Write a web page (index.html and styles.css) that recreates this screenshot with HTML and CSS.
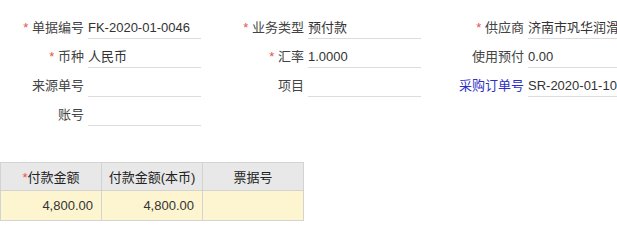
FILE: index.html
```html
<!DOCTYPE html>
<html lang="zh-CN">
<head>
<meta charset="utf-8">
<title>付款单</title>
<link rel="stylesheet" href="styles.css">
</head>
<body>
<div class="form">
  <div class="item"><label class="lbl"><span class="req">*</span> 单据编号</label><div class="field">FK-2020-01-0046</div></div>
  <div class="item"><label class="lbl"><span class="req">*</span> 业务类型</label><div class="field">预付款</div></div>
  <div class="item"><label class="lbl"><span class="req">*</span> 供应商</label><div class="field">济南市巩华润滑油有限公司</div></div>

  <div class="item"><label class="lbl"><span class="req">*</span> 币种</label><div class="field">人民币</div></div>
  <div class="item"><label class="lbl"><span class="req">*</span> 汇率</label><div class="field">1.0000</div></div>
  <div class="item"><label class="lbl">使用预付</label><div class="field">0.00</div></div>

  <div class="item"><label class="lbl">来源单号</label><div class="field"></div></div>
  <div class="item"><label class="lbl">项目</label><div class="field"></div></div>
  <div class="item"><label class="lbl link">采购订单号</label><div class="field">SR-2020-01-1001</div></div>

  <div class="item"><label class="lbl">账号</label><div class="field"></div></div>
</div>

<table class="grid">
  <thead>
    <tr><th><span class="req">*</span>付款金额</th><th>付款金额(本币)</th><th>票据号</th></tr>
  </thead>
  <tbody>
    <tr><td class="num">4,800.00</td><td class="num">4,800.00</td><td></td></tr>
  </tbody>
</table>
</body>
</html>
```
FILE: styles.css
```css
html, body {
  margin: 0;
  padding: 0;
  background: #fff;
  overflow: hidden;
}
body {
  font-family: "Liberation Sans", "Noto Sans CJK SC", sans-serif;
  font-size: 13px;
  color: #333;
  width: 617px;
}
.form {
  display: grid;
  grid-template-columns: 220px 220px 220px;
  row-gap: 8px;
  padding-top: 18px;
}
.item {
  display: flex;
  align-items: flex-end;
}
.lbl {
  width: 84px;
  text-align: right;
  line-height: 20px;
  margin-right: 4px;
  color: #444;
  white-space: nowrap;
  padding-bottom: 1px;
}
.lbl.link {
  color: #2f2fc8;
}
.req {
  color: #e8504a;
}
.field {
  width: 113px;
  height: 20px;
  line-height: 20px;
  border-bottom: 1px solid #dcdcdc;
  white-space: nowrap;
  overflow: hidden;
  color: #333;
}
.grid {
  margin-top: 36px;
  border-collapse: collapse;
  table-layout: fixed;
  width: 303px;
}
.grid th, .grid td {
  border: 1px solid #d3d3d3;
  width: 101px;
  padding: 0 8px;
  box-sizing: border-box;
  white-space: nowrap;
}
.grid th {
  background: #e8e8e8;
  height: 28px;
  padding: 0 2px;
  font-weight: normal;
  color: #222;
  text-align: center;
}
.grid td {
  background: #fdf4d0;
  height: 30px;
}
.grid td.num {
  text-align: right;
  padding-right: 8px;
}
```
